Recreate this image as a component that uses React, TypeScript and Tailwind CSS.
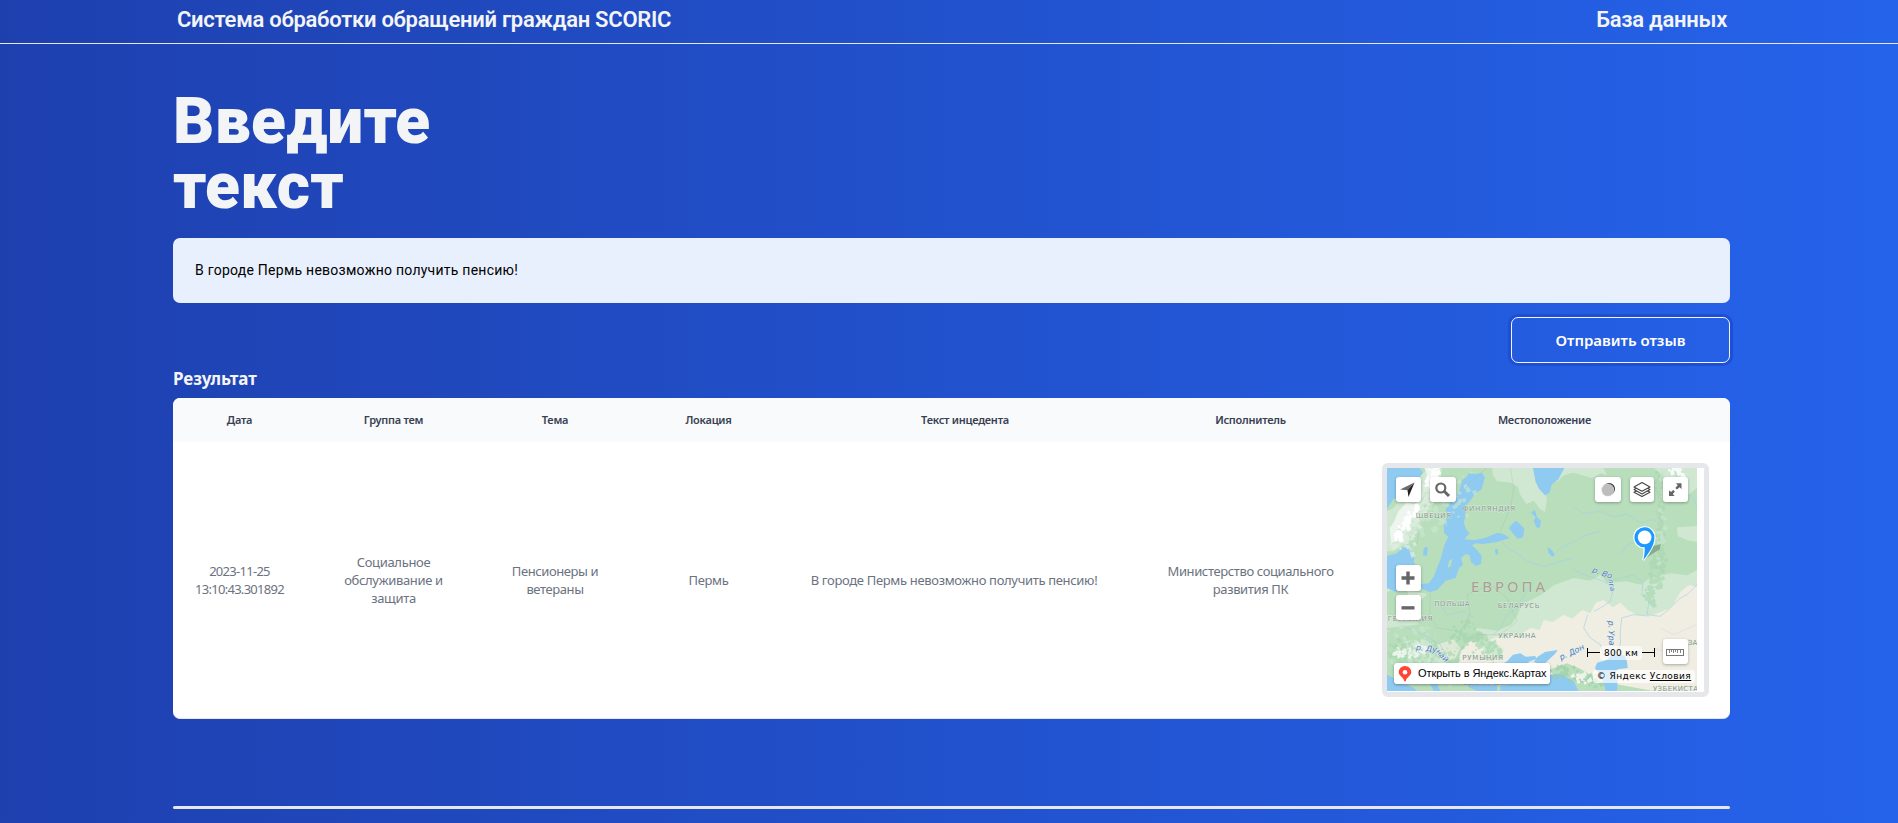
import type { ReactNode } from "react";

type Column = { title: string; value: string[]; width: string; cell: string };

const columns: Column[] = [
  { title: "Дата", value: ["2023-11-25", "13:10:43.301892"], width: "w-[133px]", cell: "tracking-[-0.72px]" },
  { title: "Группа тем", value: ["Социальное", "обслуживание и", "защита"], width: "w-[175px]", cell: "tracking-[-0.33px]" },
  { title: "Тема", value: ["Пенсионеры и", "ветераны"], width: "w-[148px]", cell: "tracking-[-0.4px]" },
  { title: "Локация", value: ["Пермь"], width: "w-[159px]", cell: "tracking-[-0.33px]" },
  {
    title: "Текст инцедента",
    value: ["В городе Пермь невозможно получить пенсию!"],
    width: "w-[354px]",
    cell: "pr-[22px] tracking-[-0.33px]",
  },
  { title: "Исполнитель", value: ["Министерство социального", "развития ПК"], width: "w-[217px]", cell: "tracking-[-0.38px]" },
];

function MapButton({ place, children }: { place: string; children: ReactNode }) {
  return (
    <button
      className={`absolute flex items-center justify-center rounded-[3px] bg-white shadow-[0_1px_3px_rgba(0,0,0,0.3)] ${place}`}
    >
      {children}
    </button>
  );
}

// Deterministic relief specks, spread around a ridge given by its two ends.
function relief(x1: number, y1: number, x2: number, y2: number, spread: number, count: number, seed: number) {
  let s = seed;
  const rnd = () => {
    s = (s * 16807) % 2147483647;
    return s / 2147483647;
  };
  rnd();
  let d = "";
  for (let i = 0; i < count; i++) {
    const t = rnd();
    const x = x1 + (x2 - x1) * t + (rnd() + rnd() - 1) * spread * 0.6;
    const y = y1 + (y2 - y1) * t + (rnd() + rnd() - 1) * spread * 0.6;
    const a = 4 + rnd() * 9;
    d += `M${x.toFixed(0)} ${y.toFixed(0)}l${a.toFixed(0)} ${(-a * rnd()).toFixed(0)}l${(a / 2).toFixed(0)} ${a.toFixed(0)}l${(-a).toFixed(0)} ${(a / 2).toFixed(0)}z`;
  }
  return d;
}

function MapDrawing() {
  return (
    <svg viewBox="0 0 930 669" preserveAspectRatio="none" className="block h-full w-full font-['DejaVu_Sans']">
      <rect width="930" height="669" fill="#b8debc" />
      {/* lighter woodland */}
      <g fill="#d0e8d2">
        <path d="M315 0H438L448 40L470 62L480 92L474 132L458 122L440 98L418 108L400 80L392 56L372 44L330 40L318 22Z" />
        <path d="M512 0H650L660 22L640 16L615 30L560 14L530 22L508 44Z" />
        <path d="M800 0H930V60L905 80L890 50L860 30L838 44L825 20Z" />
        <path d="M870 178L930 174V222L900 216L872 204Z" />
        <path d="M0 440L40 452L60 430L100 444L90 470L0 480ZM240 530L250 500L270 480L330 488L372 470L392 440L402 410L440 392L470 376L500 352L560 330L610 338L640 320L660 345L720 340L760 350L790 330L850 316L900 322L930 306V440L700 450L500 480L380 520Z" />
        <path d="M0 130L20 120L60 62L100 20L130 0H165L160 40L130 70L110 110L100 170L70 200L50 230L20 250H0Z" />
        <path d="M0 320L40 330L30 362L0 372Z" />
        <path d="M60 365L120 378L100 400L70 396Z" />
      </g>
      {/* steppe */}
      <path
        fill="#f0eee2"
        d="M930 356L905 352L880 372L862 404L850 420L800 440L752 442L722 426L700 404L678 418L650 396L626 404L610 436L586 426L556 452L530 440L498 462L470 456L458 486L430 480L400 500L372 496L356 512L330 506L300 520L270 512L236 516L206 540L200 566L230 600L440 640L560 600L640 640L800 669H930Z"
      />
      <path
        fill="#b8debc"
        d="M490 604L540 586L580 602L640 640L656 669H520ZM0 500L50 470L120 520L170 500L200 516L250 480L300 500L310 530L250 520L222 550L210 600L190 640L130 620L60 640L0 600Z"
      />
      <path fill="#d0e8d2" d="M272 516L320 520L350 545L340 572L300 560ZM50 520L110 514L160 545L180 590L120 600L60 570Z" />
      <path fill="#f0eee2" d="M150 530L200 514L220 540L200 580L170 570Z" opacity=".7" />
      {/* water */}
      <g fill="#8fcaf0">
        <path d="M0 0H98L108 14L94 34L74 58L50 66L40 90L20 92L0 122Z" />
        <path d="M246 16L268 18L284 14L294 28L284 62L262 82L238 112L234 150L230 162L238 186L248 196L232 214L262 216L294 210L332 194L350 198L368 210L330 222L288 228L268 226L254 232L268 244L284 264L282 288L266 294L252 282L248 262L236 258L222 270L228 290L216 300L206 330L176 338L150 366L130 372L104 362L98 348L126 346L140 326L150 300L162 270L172 232L184 206L172 196L170 172L180 146L176 124L192 98L214 74L226 36L238 28Z" />
        <path d="M0 264L30 256L52 234L64 228L70 248L84 262L80 280L96 316L100 340L60 352L26 372L0 360Z" />
        <path d="M110 240L122 236L120 264L108 262Z" />
        <path d="M438 0H532L514 34L494 50L488 74L474 82L456 62L446 42Z" />
        <path d="M374 170L386 158L396 166L412 182L408 208L392 212L376 194L366 180Z" />
        <path d="M432 134L444 126L450 148L462 158L458 180L448 178L440 158L446 148Z" />
        <path d="M482 238L494 246L504 262L496 266L484 254ZM324 244L332 242L334 258L326 260Z" />
        <path d="M340 590L360 580L378 560L400 556L416 566L444 564L450 572L424 582L432 600L470 622L520 618L560 640L574 669H340Z" />
        <path d="M440 582L452 566L474 552L512 546L504 558L488 572L470 590Z" />
        <path d="M630 584L660 576L676 560L712 562L720 580L722 600L692 604L682 622L692 640L690 669H656L650 642L636 618L624 600Z" />
        <path d="M0 620L40 640L80 660L90 669H0ZM230 640L330 640L330 669H270L250 660Z" />
        <path d="M126 640L150 648L160 669H140Z" />
      </g>
      <path fill="#b8debc" d="M186 278L196 272L192 294L182 300ZM50 318L62 320L58 344L46 340ZM78 320L92 330L84 344L74 340Z" />
      {/* rivers */}
      <g fill="none" stroke="#a5d3e6" strokeWidth="2.500" opacity=".8" strokeLinejoin="round">
        <path d="M560 118L590 136L640 130L680 146L720 138L760 164L800 154L820 170" />
        <path d="M340 214L360 240L400 262L420 280L470 296L520 280L560 270" />
        <path d="M500 262L520 240L560 222L600 200L640 190M700 260L720 230L760 220" />
        <path d="M556 300L580 316L620 330L650 340L680 360L670 400L640 420L620 430" />
        <path d="M680 336L740 320L768 344L764 380L786 400L780 440L820 445M820 445L850 420L880 390L900 380L930 350" />
        <path d="M440 340L410 380L390 420L360 440L340 480L320 500M602 440L590 480L610 510L640 530L650 560" />
        <path d="M676 560L700 530L700 490L704 450L740 440L786 444" />
        <path d="M860 0L880 60L920 90L930 120M150 400L180 440L230 430L260 450" />
        <path d="M60 480L110 500L160 530L190 590L240 600" />
        <path d="M820 480L860 500L930 470M800 540L860 560L900 550" stroke="#cfe3e2" />
      </g>
      <g fill="none" stroke="#9fb8a5" strokeWidth="1.500" opacity=".5">
        <path d="M120 0L140 40L130 90L100 150L90 230M230 70L250 40L300 0M370 0L380 60L370 120L340 190" />
        <path d="M130 370L128 440L150 480L220 490L250 440L240 380L310 350M310 350L360 390L390 460L340 500L260 500" />
      </g>
      {/* mountains */}
      <g>
        <path d={relief(60, 180, 200, 60, 130, 100, 59)} fill="#cce7ce" opacity=".6" />
        <path d={relief(30, 230, 130, 30, 70, 130, 1109)} fill="#dfeee0" opacity=".8" />
        <path d="M112 0H158L154 24L136 22L130 50L112 44L120 20ZM60 104L92 112L80 136L96 146L62 150L54 176L30 184L26 220L12 226L8 180L22 160L34 130Z" fill="#eef5ef" />
        <path d={relief(20, 210, 80, 120, 26, 40, 1711)} fill="#fff" />
        <path d={relief(118, 50, 140, 0, 26, 26, 1913)} fill="#fff" />
        <path d={relief(0, 550, 180, 580, 100, 110, 2309)} fill="#a4d5ad" opacity=".6" />
        <path d={relief(20, 560, 110, 540, 34, 40, 2903)} fill="#f0f6f0" opacity=".9" />
        <path d={relief(200, 480, 330, 560, 60, 80, 3109)} fill="#a0d3aa" opacity=".6" />
        <path d={relief(30, 460, 180, 620, 130, 70, 3701)} fill="#c9e6cc" opacity=".7" />
        <path d={relief(500, 606, 640, 650, 40, 50, 4111)} fill="#9bcfa6" opacity=".7" />
        <path d={relief(556, 622, 600, 640, 24, 14, 4507)} fill="#eef4ec" />
        <path d={relief(812, 20, 812, 300, 24, 90, 4327)} fill="#a9d7b1" opacity=".7" />
        <path d={relief(812, 250, 780, 400, 50, 70, 4703)} fill="#a9d7b1" opacity=".7" />
        <path d={relief(826, 10, 812, 300, 20, 40, 4909)} fill="#cbe6ce" opacity=".7" />
        <path d={relief(850, 0, 880, 20, 30, 16, 5303)} fill="#fff" opacity=".8" />
      </g>
      {/* country names */}
      <g fill="#87958d" stroke="#e6f2e7" strokeWidth="2" paintOrder="stroke" fontSize="21">
        <text x="86" y="150" textLength="106">ШВЕЦИЯ</text>
        <text x="226" y="130" textLength="158">ФИНЛЯНДИЯ</text>
        <text x="142" y="413" textLength="106">ПОЛЬША</text>
        <text x="332" y="419" textLength="126">БЕЛАРУСЬ</text>
        <text x="2" y="458" textLength="134">ГЕРМАНИЯ</text>
        <text x="334" y="511" textLength="112">УКРАИНА</text>
        <text x="226" y="575" textLength="122">РУМЫНИЯ</text>
        <text x="228" y="652" textLength="134">БОЛГАРИЯ</text>
        <text x="798" y="669" textLength="152">УЗБЕКИСТАН</text>
        <text x="903" y="532">ЗА</text>
      </g>
      <text
        x="252"
        y="372"
        textLength="222"
        fill="#aa9c94"
        stroke="#d5e6d4"
        strokeWidth="2"
        paintOrder="stroke"
        fontSize="45"
        className="font-['Noto_Sans']"
      >
        ЕВРОПА
      </text>
      {/* river names */}
      <g fill="#4577c2" stroke="#e8f3ea" strokeWidth="2" paintOrder="stroke" fontSize="24" fontStyle="italic">
        <text transform="translate(614 312) rotate(20)">р. Во</text>
        <text transform="translate(664 334) rotate(80)" fontSize="21">лга</text>
        <text transform="translate(664 458) rotate(88)">р. Ура</text>
        <text transform="translate(522 577) rotate(-26)">р. Дон</text>
        <text transform="translate(86 546) rotate(6)">р. Ду</text>
        <text transform="translate(146 552) rotate(48)" fontSize="22">най</text>
      </g>
      {/* placemark */}
      <path d="M771 274L790 236L822 228L818 244Z" fill="#4f6b56" opacity=".45" />
      <path
        d="M769 276C772 262 774 252 773 238A30 30 0 1 1 802 212C801 232 788 252 769 276Z"
        fill="#1e98ff"
        stroke="#fff"
        strokeWidth="7"
        paintOrder="stroke"
      />
      <circle cx="773" cy="208" r="20.500" fill="#fff" />
    </svg>
  );
}

function LocationMap() {
  return (
    <div className="h-[234px] w-[327px] rounded-md border-[5px] border-[#e5e7eb] bg-white">
      <div className="relative h-[223px] w-[310px] overflow-hidden">
        <MapDrawing />
        <MapButton place="left-[9px] top-[9px] size-[25px]">
          <svg viewBox="0 0 25 25" className="size-full">
            <path d="M18.500 5.500L4 12.500L11.500 13.200Z" fill="#6b6b6b" />
            <path d="M18.500 5.500L11.500 13.200L12.500 20Z" fill="#222" />
          </svg>
        </MapButton>
        <MapButton place="left-[43px] top-[9px] h-[25px] w-[26px]">
          <svg viewBox="0 0 26 25" className="size-full" fill="none" stroke="#666">
            <circle cx="10.800" cy="11" r="4.500" strokeWidth="2.200" />
            <path d="M14.200 14.300L19 19" strokeWidth="3" />
          </svg>
        </MapButton>
        <MapButton place="left-[208px] top-[9px] h-[25px] w-[26px]">
          <svg viewBox="0 0 26 25" className="size-full">
            <circle cx="14" cy="12" r="6" fill="#222" />
            <circle cx="12.800" cy="13" r="6.300" fill="#bdbdbd" stroke="#fff" strokeWidth=".3" />
          </svg>
        </MapButton>
        <MapButton place="left-[243px] top-[9px] h-[25px] w-[24px]">
          <svg viewBox="0 0 24 25" className="size-full" fill="#fff" stroke="#444" strokeWidth="1.100" strokeLinejoin="round">
            <path d="M12 11L20 15.300L12 19.600L4 15.300Z" />
            <path d="M12 8.300L20 12.600L12 16.900L4 12.600Z" />
            <path d="M12 5.600L20 9.900L12 14.200L4 9.900Z" />
          </svg>
        </MapButton>
        <MapButton place="left-[276px] top-[9px] size-[25px]">
          <svg viewBox="0 0 25 25" className="size-full" fill="#666">
            <path d="M18.500 6.200V12L16.500 10.200L14 12.600L12.300 10.900L14.700 8.300L13 6.200Z" />
            <path d="M6 19V13.200L8 15L10.200 12.900L11.900 14.600L9.800 17L11.600 19Z" />
          </svg>
        </MapButton>
        <MapButton place="left-[9px] top-[97px] h-[26px] w-[25px]">
          <svg viewBox="0 0 25 26" className="size-full" fill="#666">
            <path d="M10.300 6.500h3.400v4.800h4.800v3.400h-4.800v4.800h-3.400v-4.800h-4.800v-3.400h4.800z" />
          </svg>
        </MapButton>
        <MapButton place="left-[9px] top-[127px] size-[25px]">
          <svg viewBox="0 0 25 25" className="size-full" fill="#666">
            <path d="M5.500 11.200h13v3.300h-13z" />
          </svg>
        </MapButton>
        <MapButton place="left-[276px] top-[171px] size-[25px]">
          <svg viewBox="0 0 25 25" className="size-full" fill="none" stroke="#777">
            <rect x="3.500" y="10.500" width="17" height="6" />
            <path d="M6.500 11v3M8.500 11v2M10.500 11v3M12.500 11v2M14.500 11v3M17.500 11v3" strokeWidth=".9" />
          </svg>
        </MapButton>

        <div className="absolute left-[200px] top-[179px] flex h-[11px] w-[68px] items-center">
          <span className="flex h-[9px] flex-1 items-center border-l border-black">
            <span className="h-px w-full bg-black" />
          </span>
          <span className="h-[14px] w-[42px] rounded-[3px] bg-white/60 text-center font-['DejaVu_Sans'] text-[9px] leading-[14px] tracking-[0.3px] text-black">
            800 км
          </span>
          <span className="flex h-[9px] flex-1 items-center border-r border-black">
            <span className="h-px w-full bg-black" />
          </span>
        </div>

        <div className="absolute left-[206px] top-[202px] h-[13px] w-[102px] whitespace-nowrap rounded-[3px] bg-white/70 text-center font-['DejaVu_Sans'] text-[9px] leading-[13px] tracking-[0.45px] text-black">
          © Яндекс <span className="underline">Условия</span>
        </div>

        <div className="absolute left-[7px] top-[195px] flex h-[21px] w-[156px] items-center whitespace-nowrap rounded-[3px] bg-white pl-[4px] shadow-[0_1px_3px_rgba(0,0,0,0.35)]">
          <svg viewBox="0 0 14 17" className="mr-[6px] h-[17px] w-[14px]">
            <path d="M7 1A6.300 6.300 0 0 0 .7 7.300C.7 11 5.600 11.800 6.300 16.200h1.400C8.400 11.800 13.300 11 13.300 7.300A6.300 6.300 0 0 0 7 1Z" fill="#f43" />
            <circle cx="7" cy="7.300" r="2.300" fill="#fff" />
          </svg>
          <span className="font-['Liberation_Sans'] text-[11px] leading-none tracking-[-0.07px] text-black">
            Открыть в Яндекс.Картах
          </span>
        </div>
      </div>
    </div>
  );
}

export default function App() {
  return (
    <div className="h-[823px] overflow-hidden bg-linear-to-r from-[#1e40af] to-[#2563eb] font-['Noto_Sans',sans-serif] text-[#f3f4f6]">
      <header className="flex h-[44px] justify-between border-b border-[#e5e7eb] pl-[177px] pr-[171px] font-['Roboto',sans-serif] text-[22px] font-semibold tracking-[-0.27px]">
        <a className="leading-[39px]">Система обработки обращений граждан SCORIC</a>
        <a className="leading-[39px]">База данных</a>
      </header>
      <main className="ml-[173px] w-[1557px] pt-[45px]">
        <h1 className="w-[300px] font-['Roboto',sans-serif] text-[64px] font-black leading-[65px] tracking-[0.35px]">
          Введите
          <br />
          текст
        </h1>
        <div className="mt-[19px] flex h-[65px] items-center rounded-[7px] bg-[#e8f0fe] pb-[2px] pl-[22px] font-['Roboto',sans-serif] text-sm tracking-[0.25px] text-black">
          В городе Пермь невозможно получить пенсию!
        </div>
        <div className="mt-[14px] flex justify-end">
          <button className="h-[46px] w-[219px] rounded-[7px] border border-[#f3f4f6] text-[15px] font-semibold text-white ring-[3px] ring-[#1d4ed8]">
            Отправить отзыв
          </button>
        </div>
        <h2 className="mt-[4px] h-[31px] text-[17px] font-bold leading-[24px] tracking-[-0.1px]">Результат</h2>
        <section className="h-[321px] overflow-hidden rounded-[7px] border-b border-[#e5e7eb] bg-white text-center">
          <div className="flex h-[44px] items-center bg-[#f9fafb] text-[11px] font-semibold tracking-[-0.25px] text-[#374151]">
            {columns.map((c) => (
              <div key={c.title} className={c.width}>
                {c.title}
              </div>
            ))}
            <div className="w-[371px]">Местоположение</div>
          </div>
          <div className="flex h-[276px] items-center text-[13px] leading-[18px] text-[#6b7280]">
            {columns.map((c) => (
              <div key={c.title} className={`${c.width} ${c.cell}`}>
                {c.value.map((line) => (
                  <div key={line}>{line}</div>
                ))}
              </div>
            ))}
            <div className="flex w-[371px] justify-center pl-[2px]">
              <LocationMap />
            </div>
          </div>
        </section>
        <hr className="mt-[87px] h-[3px] rounded-full border-0 bg-[#e5e7eb]" />
      </main>
    </div>
  );
}
